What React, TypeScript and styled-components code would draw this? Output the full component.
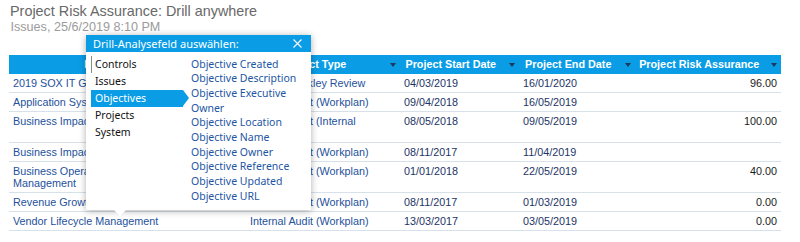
import React from 'react'
import styled, { createGlobalStyle, css } from 'styled-components'

const GlobalStyle = createGlobalStyle`
  body {
    margin: 0;
    background: #fff;
    font-family: "Liberation Sans", Arial, sans-serif;
  }
`

const Page = styled.div`
  position: relative;
  width: 800px;
  height: 242px;
  overflow: hidden;
  box-sizing: border-box;
  padding: 3px 0 0 9px;
`

const Title = styled.div`
  font-size: 14.4px;
  line-height: 17px;
  color: #686868;
  padding-left: 1px;
`

const Subtitle = styled.div`
  font-size: 12.6px;
  line-height: 15px;
  color: #9b9b9b;
  padding-left: 1.5px;
`

const Table = styled.table`
  margin-top: 20px;
  border-collapse: collapse;
  table-layout: fixed;
  width: 772px;
  font-size: 10.8px;
`

const HeadCell = styled.th`
  background: #0a9de6;
  color: #fff;
  font-weight: bold;
  line-height: 19px;
  padding: 0 4.5px 0 4px;
  white-space: nowrap;
  .inner {
    display: flex;
    align-items: center;
  }
  .label {
    flex: 1;
    text-align: center;
    overflow: hidden;
  }
`

const SortArrow = styled.span`
  width: 0;
  height: 0;
  margin-left: 11px;
  border-left: 3.5px solid transparent;
  border-right: 3.5px solid transparent;
  border-top: 4px solid #1d3a5c;
`

type Kind = 'text' | 'date' | 'num'

const Cell = styled.td<{ $kind: Kind }>`
  padding: 3px 4px;
  line-height: 12px;
  vertical-align: top;
  border-bottom: 1px solid #d7e1ea;
  color: #24519b;
  ${props => props.$kind === 'date' && css`
    color: #1c3466;
  `}
  ${props => props.$kind === 'num' && css`
    color: #1a1a1a;
    text-align: right;
  `}
`

const Popup = styled.div`
  position: absolute;
  left: 86px;
  top: 35px;
  width: 225px;
  background: #fff;
  box-shadow: 0 1px 7px rgba(0, 0, 0, 0.32);
  font-family: "Noto Sans", "Open Sans", sans-serif;
  z-index: 2;
  &::after {
    content: '';
    position: absolute;
    left: 28px;
    bottom: -6px;
    border-left: 6px solid transparent;
    border-right: 6px solid transparent;
    border-top: 6px solid #fff;
  }
`

const PopupHeader = styled.div`
  height: 17px;
  background: #0a9de6;
  color: #fff;
  font-size: 11px;
  display: flex;
  align-items: center;
  justify-content: space-between;
  padding: 0 9px 0 7px;
`

const PopupBody = styled.div`
  display: flex;
  align-items: flex-start;
  padding: 3.5px 0 6px 5px;
`

const FieldList = styled.div`
  width: 92px;
  flex-shrink: 0;
`

const FieldItem = styled.div<{ $selected?: boolean; $focused?: boolean }>`
  position: relative;
  box-sizing: border-box;
  height: 17px;
  line-height: 17px;
  padding-left: 4px;
  font-size: 10.5px;
  color: #111;
  ${props => props.$focused && css`
    border-left: 1px solid #8a8a8a;
    padding-left: 3px;
  `}
  ${props => props.$selected && css`
    background: #0a9de6;
    color: #fff;
    &::after {
      content: '';
      position: absolute;
      right: -6px;
      top: 0;
      border-top: 8.5px solid transparent;
      border-bottom: 8.5px solid transparent;
      border-left: 6px solid #0a9de6;
    }
  `}
`

const AttributeList = styled.div`
  width: 116px;
  margin-left: 8px;
  padding-top: 1px;
`

const AttributeItem = styled.div`
  font-size: 10.5px;
  line-height: 14.7px;
  color: #1d56a3;
`

const CloseIcon = () => (
  <svg width="9" height="9" viewBox="0 0 9 9">
    <path d="M0.5 0.5 L8.5 8.5 M8.5 0.5 L0.5 8.5" stroke="#fff" strokeWidth="1.1" fill="none" />
  </svg>
)

const columns = [
  { label: 'Project Name', width: 237 },
  { label: 'Project Type', width: 154 },
  { label: 'Project Start Date', width: 119 },
  { label: 'Project End Date', width: 116 },
  { label: 'Project Risk Assurance', width: 146 },
]

const rows = [
  ['2019 SOX IT General Controls Testing', 'Internal Buckley Review', '04/03/2019', '16/01/2020', '96.00'],
  ['Application System Review', 'Internal Audit (Workplan)', '09/04/2018', '16/05/2019', ''],
  ['Business Impact Analysis', 'Internal Audit (Internal Review)', '08/05/2018', '09/05/2019', '100.00'],
  ['Business Impact Assessment', 'Internal Audit (Workplan)', '08/11/2017', '11/04/2019', ''],
  ['Business Operations Resilience & Continuity Management', 'Internal Audit (Workplan)', '01/01/2018', '22/05/2019', '40.00'],
  ['Revenue Growth Initiative', 'Internal Audit (Workplan)', '08/11/2017', '01/03/2019', '0.00'],
  ['Vendor Lifecycle Management', 'Internal Audit (Workplan)', '13/03/2017', '03/05/2019', '0.00'],
]

const kinds: Kind[] = ['text', 'text', 'date', 'date', 'num']

const fields = ['Controls', 'Issues', 'Objectives', 'Projects', 'System']

const attributes = [
  'Objective Created',
  'Objective Description',
  'Objective Executive Owner',
  'Objective Location',
  'Objective Name',
  'Objective Owner',
  'Objective Reference',
  'Objective Updated',
  'Objective URL',
]

const App: React.FC = () => {
  return <Page>
    <GlobalStyle />
    <Title>Project Risk Assurance: Drill anywhere</Title>
    <Subtitle>Issues, 25/6/2019 8:10 PM</Subtitle>
    <Table>
      <colgroup>
        {columns.map(col => <col key={col.label} style={{ width: col.width }} />)}
      </colgroup>
      <thead>
        <tr>
          {columns.map(col =>
            <HeadCell key={col.label}>
              <div className='inner'>
                <span className='label'>{col.label}</span>
                <SortArrow />
              </div>
            </HeadCell>)}
        </tr>
      </thead>
      <tbody>
        {rows.map((row, idx) =>
          <tr key={idx}>
            {row.map((value, i) => <Cell key={i} $kind={kinds[i]}>{value}</Cell>)}
          </tr>)}
      </tbody>
    </Table>

    <Popup>
      <PopupHeader>
        <span>Drill-Analysefeld auswählen:</span>
        <CloseIcon />
      </PopupHeader>
      <PopupBody>
        <FieldList>
          {fields.map((f, idx) =>
            <FieldItem key={f} $focused={idx === 0} $selected={f === 'Objectives'}>{f}</FieldItem>)}
        </FieldList>
        <AttributeList>
          {attributes.map(a => <AttributeItem key={a}>{a}</AttributeItem>)}
        </AttributeList>
      </PopupBody>
    </Popup>
  </Page>
}

export default App
